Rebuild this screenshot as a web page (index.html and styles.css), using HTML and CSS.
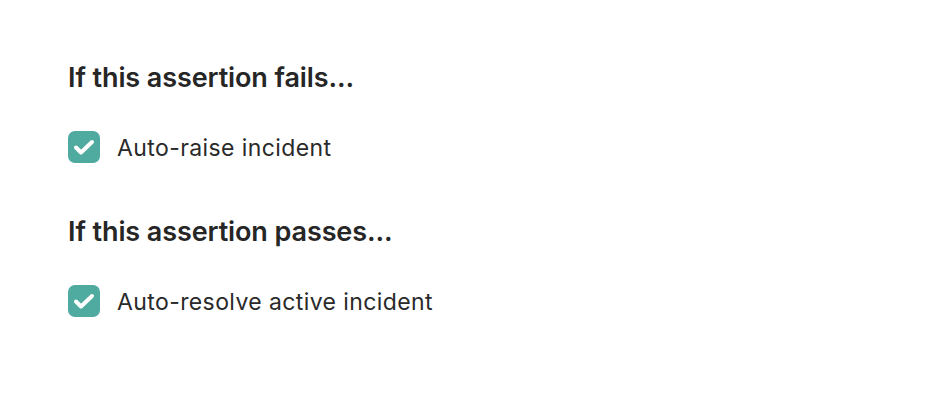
FILE: index.html
```html
<!DOCTYPE html>
<html>
<head>
<meta charset="utf-8">
<link rel="stylesheet" href="styles.css">
</head>
<body>
<div class="panel">
  <section class="group">
    <h2 class="title">If this assertion fails...</h2>
    <label class="option">
      <span class="box"><svg viewBox="0 0 32 32" width="32" height="32"><path d="M8 16.5l5 5 11-10.5" fill="none" stroke="#fff" stroke-width="4" stroke-linecap="round" stroke-linejoin="round"/></svg></span>
      <span class="label">Auto-raise incident</span>
    </label>
  </section>
  <section class="group">
    <h2 class="title">If this assertion passes...</h2>
    <label class="option">
      <span class="box"><svg viewBox="0 0 32 32" width="32" height="32"><path d="M8 16.5l5 5 11-10.5" fill="none" stroke="#fff" stroke-width="4" stroke-linecap="round" stroke-linejoin="round"/></svg></span>
      <span class="label">Auto-resolve active incident</span>
    </label>
  </section>
</div>
</body>
</html>
```
FILE: styles.css
```css
html, body {
  margin: 0;
  padding: 0;
  background: #fff;
}
body {
  font-family: Inter, "Noto Sans", sans-serif;
  color: #262626;
}
.panel {
  padding: 58px 68px 0;
  display: flex;
  flex-direction: column;
  gap: 48px;
}
.group {
  display: flex;
  flex-direction: column;
  gap: 31px;
}
.title {
  margin: 0;
  font-size: 27px;
  font-weight: 600;
  line-height: 40px;
  letter-spacing: -0.1px;
}
.option {
  display: flex;
  align-items: center;
  gap: 17px;
}
.box {
  width: 32px;
  height: 32px;
  border-radius: 7px;
  background: #4fab9f;
  display: flex;
}
.label {
  font-size: 23px;
  font-weight: 400;
  line-height: 32px;
  padding-top: 3px;
  letter-spacing: 0.4px;
  color: #2a2a2a;
}
```
